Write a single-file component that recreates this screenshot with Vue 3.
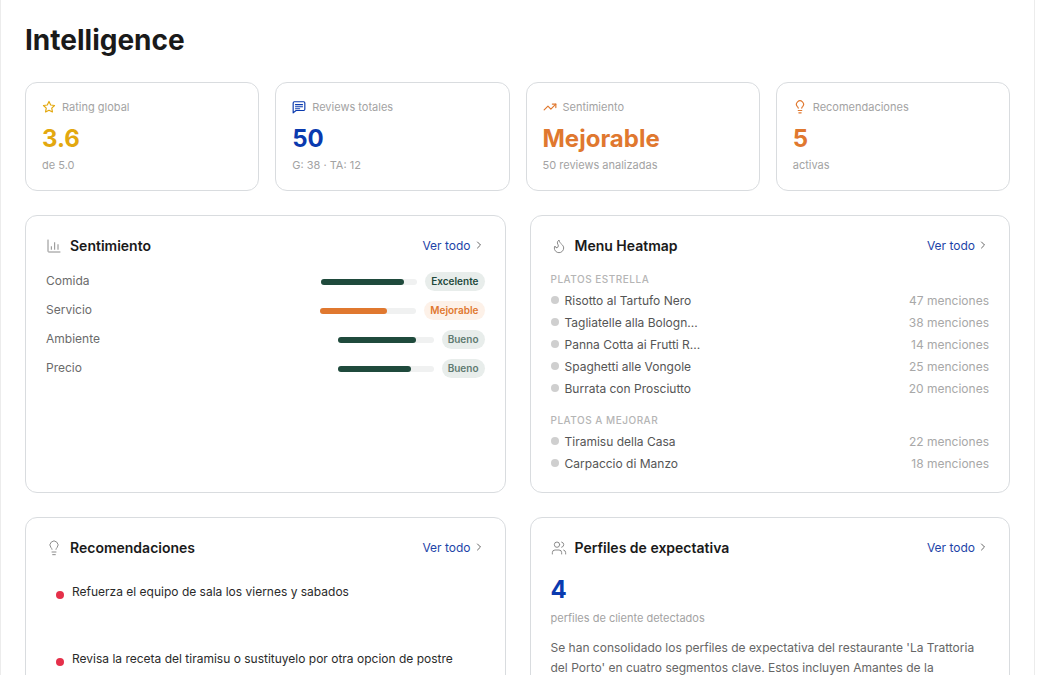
<script setup>
const stats = [
  { label: 'Rating global', value: '3.6', sub: 'de 5.0', tone: 'gold', icon: 'star' },
  { label: 'Reviews totales', value: '50', sub: 'G: 38 · TA: 12', tone: 'blue', icon: 'message' },
  { label: 'Sentimiento', value: 'Mejorable', sub: '50 reviews analizadas', tone: 'orange', icon: 'trend' },
  { label: 'Recomendaciones', value: '5', sub: 'activas', tone: 'orange', icon: 'bulb' },
]

const sentiment = [
  { name: 'Comida', pct: 86, label: 'Excelente', tone: 'excellent' },
  { name: 'Servicio', pct: 70, label: 'Mejorable', tone: 'warn' },
  { name: 'Ambiente', pct: 82, label: 'Bueno', tone: 'good' },
  { name: 'Precio', pct: 76, label: 'Bueno', tone: 'good' },
]

const stars = [
  { name: 'Risotto al Tartufo Nero', count: 47 },
  { name: 'Tagliatelle alla Bologn...', count: 38 },
  { name: 'Panna Cotta ai Frutti R...', count: 14 },
  { name: 'Spaghetti alle Vongole', count: 25 },
  { name: 'Burrata con Prosciutto', count: 20 },
]

const toImprove = [
  { name: 'Tiramisu della Casa', count: 22 },
  { name: 'Carpaccio di Manzo', count: 18 },
]

const recommendations = [
  'Refuerza el equipo de sala los viernes y sabados',
  'Revisa la receta del tiramisu o sustituyelo por otra opcion de postre',
]
</script>

<template>
  <main class="page">
    <h1>Intelligence</h1>

    <section class="stats">
      <div v-for="s in stats" :key="s.label" class="stat">
        <div class="stat-head">
          <svg class="icon-sm" :class="s.tone" viewBox="0 0 24 24">
            <path v-if="s.icon === 'star'" d="M12 2.500l2.900 6 6.600.9-4.800 4.600 1.200 6.500L12 17.400l-5.900 3.100 1.200-6.500L2.500 9.400l6.600-.9z" />
            <template v-else-if="s.icon === 'message'">
              <path d="M22 5v11a2 2 0 0 1-2 2H7l-5 4V5a2 2 0 0 1 2-2h16a2 2 0 0 1 2 2z" />
              <path d="M6 8h12M6 11.500h12M6 15h7" />
            </template>
            <template v-else-if="s.icon === 'trend'">
              <path d="M22 7l-8.500 8.500-5-5L2 17" />
              <path d="M16 7h6v6" />
            </template>
            <template v-else>
              <path d="M15 14c.2-1 .7-1.700 1.500-2.500A6 6 0 1 0 7.500 11.500c.8.800 1.300 1.500 1.500 2.500" />
              <path d="M9 18h6M10 22h4" />
            </template>
          </svg>
          <span>{{ s.label }}</span>
        </div>
        <div class="stat-value" :class="s.tone">{{ s.value }}</div>
        <div class="stat-sub">{{ s.sub }}</div>
      </div>
    </section>

    <section class="panels">
      <article class="panel">
        <header class="panel-head">
          <div class="panel-title">
            <svg class="icon" viewBox="0 0 24 24">
              <path d="M3 3v17a1 1 0 0 0 1 1h17M8 17v-4M13 17V7M18 17v-7" />
            </svg>
            <h2>Sentimiento</h2>
          </div>
          <a class="more">Ver todo
            <svg viewBox="0 0 24 24"><path d="M9 6l6 6-6 6" /></svg>
          </a>
        </header>
        <div class="sent-list">
          <div v-for="row in sentiment" :key="row.name" class="sent-row">
            <span class="sent-name">{{ row.name }}</span>
            <div class="track">
              <div class="fill" :class="row.tone" :style="{ width: row.pct + '%' }"></div>
            </div>
            <span class="badge" :class="row.tone">{{ row.label }}</span>
          </div>
        </div>
      </article>

      <article class="panel">
        <header class="panel-head">
          <div class="panel-title">
            <svg class="icon" viewBox="0 0 24 24">
              <path d="M8.500 14.500A2.500 2.500 0 0 0 11 12c0-1.400-.5-2-1-3-1.100-2.100-.2-4.100 2-6 .5 2.500 2 4.900 4 6.500s3 3.500 3 5.500a7 7 0 1 1-14 0c0-1.200.4-2.300 1-3a2.500 2.500 0 0 0 2.500 2.500z" />
            </svg>
            <h2>Menu Heatmap</h2>
          </div>
          <a class="more">Ver todo
            <svg viewBox="0 0 24 24"><path d="M9 6l6 6-6 6" /></svg>
          </a>
        </header>
        <h3 class="group">PLATOS ESTRELLA</h3>
        <div v-for="d in stars" :key="d.name" class="dish">
          <i class="dot"></i>
          <span class="dish-name">{{ d.name }}</span>
          <span class="dish-count">{{ d.count }} menciones</span>
        </div>
        <h3 class="group second">PLATOS A MEJORAR</h3>
        <div v-for="d in toImprove" :key="d.name" class="dish">
          <i class="dot"></i>
          <span class="dish-name">{{ d.name }}</span>
          <span class="dish-count">{{ d.count }} menciones</span>
        </div>
      </article>

      <article class="panel">
        <header class="panel-head">
          <div class="panel-title">
            <svg class="icon" viewBox="0 0 24 24">
              <path d="M15 14c.2-1 .7-1.700 1.500-2.500A6 6 0 1 0 7.500 11.500c.8.800 1.300 1.500 1.500 2.500" />
              <path d="M9 18h6M10 22h4" />
            </svg>
            <h2>Recomendaciones</h2>
          </div>
          <a class="more">Ver todo
            <svg viewBox="0 0 24 24"><path d="M9 6l6 6-6 6" /></svg>
          </a>
        </header>
        <div class="recs">
          <div v-for="r in recommendations" :key="r" class="rec">
            <i class="rec-dot"></i>
            <span>{{ r }}</span>
          </div>
        </div>
      </article>

      <article class="panel">
        <header class="panel-head">
          <div class="panel-title">
            <svg class="icon" viewBox="0 0 24 24">
              <path d="M16 21v-2a4 4 0 0 0-4-4H6a4 4 0 0 0-4 4v2" />
              <circle cx="9" cy="7" r="4" />
              <path d="M22 21v-2a4 4 0 0 0-3-3.900M16 3.100a4 4 0 0 1 0 7.800" />
            </svg>
            <h2>Perfiles de expectativa</h2>
          </div>
          <a class="more">Ver todo
            <svg viewBox="0 0 24 24"><path d="M9 6l6 6-6 6" /></svg>
          </a>
        </header>
        <div class="profile-count">4</div>
        <div class="profile-sub">perfiles de cliente detectados</div>
        <p class="profile-text">Se han consolidado los perfiles de expectativa del restaurante 'La Trattoria del Porto' en cuatro segmentos clave. Estos incluyen Amantes de la</p>
      </article>
    </section>
  </main>
</template>

<style>
html, body {
  margin: 0;
  background: #fff;
  overflow: hidden;
}
</style>

<style scoped>
.page {
  box-sizing: border-box;
  width: 1035px;
  height: 675px;
  overflow: hidden;
  padding: 24px 24px 0;
  border-left: 1px solid #ececec;
  border-right: 1px solid #ececec;
  font-family: Inter, "Liberation Sans", sans-serif;
  color: #1a1a1a;
}

h1 {
  margin: 0 0 26px;
  font-size: 28px;
  line-height: 32px;
  font-weight: 700;
  color: #1a1a1a;
}

.stats {
  display: grid;
  grid-template-columns: repeat(4, 1fr);
  gap: 16px;
  margin-bottom: 24px;
}

.stat {
  box-sizing: border-box;
  height: 109px;
  padding: 16px;
  border: 1px solid #d9dcdf;
  border-radius: 12px;
}

.stat-head {
  display: flex;
  align-items: center;
  gap: 6px;
  height: 16px;
  font-size: 11px;
  color: #a3a3a3;
}

.stat-value {
  margin-top: 9px;
  font-size: 24px;
  line-height: 30px;
  font-weight: 700;
}

.stat-sub {
  margin-top: 3px;
  font-size: 11px;
  line-height: 16px;
  color: #a3a3a3;
}

.gold { color: #e3a80f; }
.blue { color: #0a3aaf; }
.orange { color: #e0782f; }

svg {
  fill: none;
  stroke: currentColor;
  stroke-linecap: round;
  stroke-linejoin: round;
}

.icon-sm {
  width: 14px;
  height: 14px;
  flex: none;
  stroke-width: 2;
}

.panels {
  display: grid;
  grid-template-columns: 1fr 1fr;
  gap: 24px;
}

.panel {
  box-sizing: border-box;
  height: 278px;
  padding: 20px;
  border: 1px solid #d9dcdf;
  border-radius: 12px;
}

.panel-head {
  display: flex;
  align-items: center;
  justify-content: space-between;
  height: 20px;
}

.panel-title {
  display: flex;
  align-items: center;
  gap: 8px;
}

.icon {
  width: 16px;
  height: 16px;
  flex: none;
  stroke-width: 1.5;
  color: #8c8c8c;
}

h2 {
  margin: 0;
  font-size: 14px;
  line-height: 20px;
  font-weight: 600;
  color: #1a1a1a;
}

.more {
  display: flex;
  align-items: center;
  gap: 2px;
  margin-bottom: 2px;
  font-size: 12px;
  color: #1d44a8;
}

.more svg {
  width: 12px;
  height: 12px;
  stroke-width: 1.8;
  color: #555;
}

.sent-list {
  display: flex;
  flex-direction: column;
  gap: 10px;
  margin-top: 16px;
}

.sent-row {
  display: flex;
  align-items: center;
  gap: 8px;
  height: 19px;
  font-size: 12px;
  color: #6b6b6b;
}

.sent-name {
  flex: 1;
  margin-bottom: 2px;
}

.track {
  width: 96px;
  height: 6px;
  border-radius: 3px;
  background: #f0f1f1;
}

.fill {
  height: 100%;
  border-radius: 3px;
  background: #1f4a3c;
}

.fill.warn {
  background: #e0782f;
}

.badge {
  padding: 0 6px;
  line-height: 19px;
  border-radius: 10px;
  font-size: 10px;
  font-weight: 600;
}

.badge.excellent {
  background: #e8edeb;
  color: #1f4a3c;
}

.badge.warn {
  background: #fdf1e8;
  color: #e0782f;
}

.badge.good {
  background: #e8edeb;
  color: #5f7a70;
}

.group {
  margin: 16px 0 3px;
  font-size: 10px;
  line-height: 14px;
  font-weight: 500;
  letter-spacing: 0.5px;
  color: #b5b5b5;
}

.group.second {
  margin-top: 14px;
}

.dish {
  display: flex;
  align-items: center;
  height: 22px;
  font-size: 12px;
}

.dot {
  width: 8px;
  height: 8px;
  margin-right: 6px;
  border-radius: 50%;
  background: #cfcfcf;
}

.dish-name {
  flex: 1;
  color: #555;
}

.dish-count {
  color: #a8a8a8;
}

.recs {
  display: flex;
  flex-direction: column;
  margin-top: 26px;
}

.rec {
  display: flex;
  gap: 8px;
  height: 67px;
  padding: 0 10px;
  font-size: 12px;
  line-height: 16px;
  color: #2a2a2a;
}

.rec-dot {
  width: 8px;
  height: 8px;
  margin-top: 7px;
  flex: none;
  border-radius: 50%;
  background: #e5304a;
}

.profile-count {
  margin-top: 17px;
  font-size: 24px;
  line-height: 30px;
  font-weight: 700;
  color: #0a3aaf;
}

.profile-sub {
  margin-top: 5px;
  font-size: 11px;
  line-height: 16px;
  color: #a3a3a3;
}

.profile-text {
  margin: 12px 0 0;
  font-size: 12px;
  line-height: 20px;
  color: #666;
}
</style>
